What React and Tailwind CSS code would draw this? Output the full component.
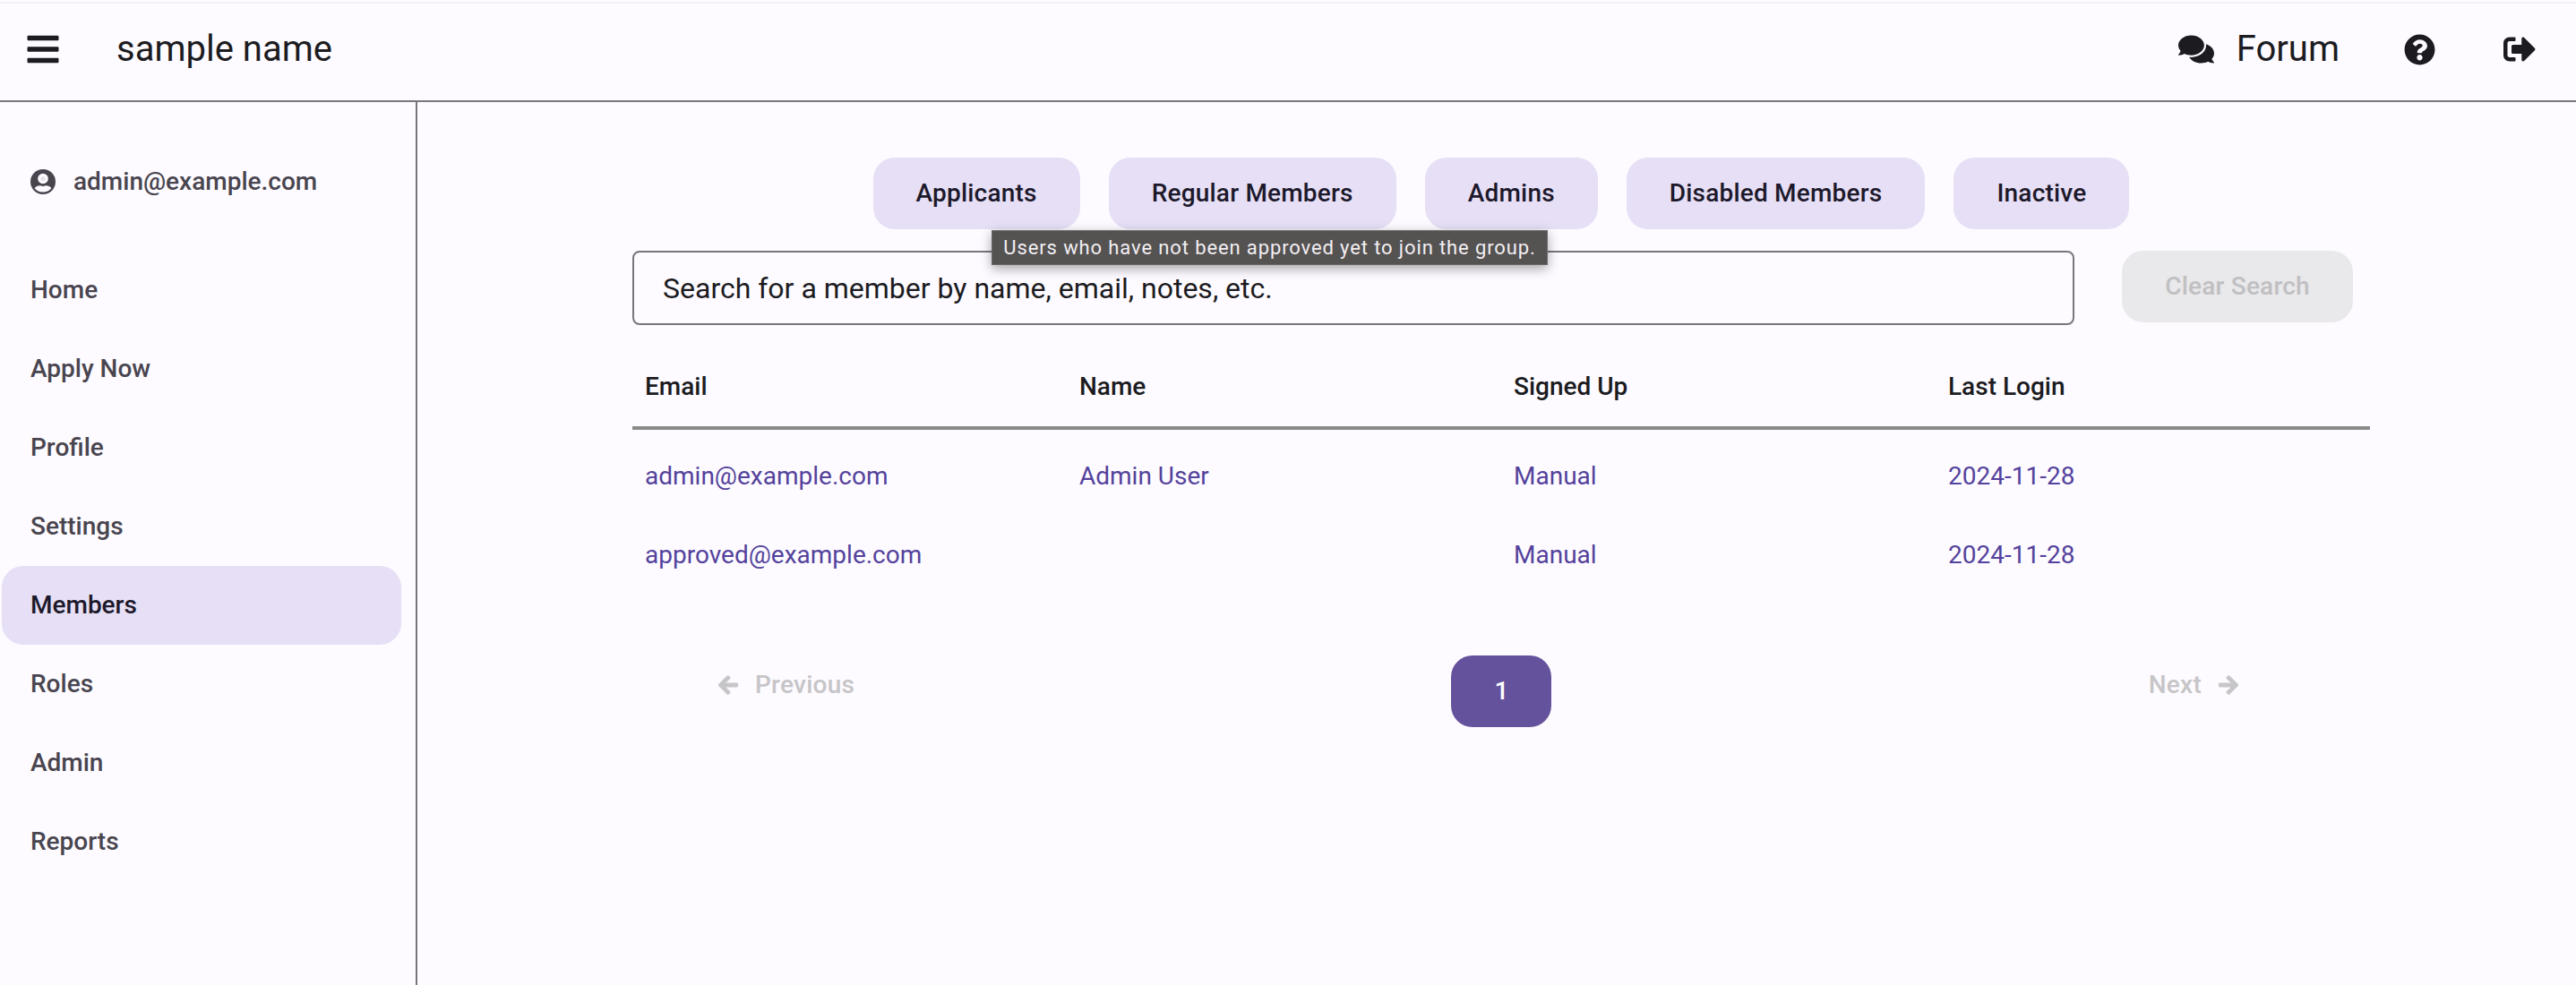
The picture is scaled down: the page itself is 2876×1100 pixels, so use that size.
import React from "react";
import { FaBars, FaComments, FaQuestionCircle, FaSignOutAlt, FaArrowLeft, FaArrowRight } from "react-icons/fa";

const nav = ["Home", "Apply Now", "Profile", "Settings", "Members", "Roles", "Admin", "Reports"];
const tabs = ["Applicants", "Regular Members", "Admins", "Disabled Members", "Inactive"];
const rows = [
  ["admin@example.com", "Admin User", "Manual", "2024-11-28"],
  ["approved@example.com", "", "Manual", "2024-11-28"],
];
const heads = ["Email", "Name", "Signed Up", "Last Login"];

function UserIcon() {
  return (
    <svg viewBox="0 0 28 28" className="h-[28px] w-[28px] shrink-0">
      <circle cx="14" cy="14" r="14" fill="#49454f" />
      <circle cx="14" cy="10.5" r="5.8" fill="#fdfbff" />
      <circle cx="14" cy="10.5" r="2.6" fill="#e4e2e7" />
      <path d="M4.6 21.2C6.4 18.6 9 18 11 18.2c1 .5 2 .8 3 .8s2-.3 3-.8c2-.2 4.6.4 6.4 3C21.2 24 17.8 25.6 14 25.6S6.800 24 4.600 21.200z" fill="#fdfbff" />
    </svg>
  );
}

export default function App() {
  return (
    <div className="h-[1100px] overflow-hidden bg-[#fdfbff] text-[#1c1b1f] font-['Roboto',sans-serif]">
      <div className="h-[2px]" />
      <div className="h-[2px] bg-[#f3f1f4]" />
      <header className="flex h-[108px] items-center pb-[6px] pl-[28px] pr-[45px]">
        <FaBars className="text-[40px]" />
        <span className="ml-[62px] text-[40px] leading-none">sample name</span>
        <div className="ml-auto flex items-center">
          <FaComments className="text-[40px]" />
          <span className="ml-[25px] text-[40px] leading-none">Forum</span>
          <FaQuestionCircle className="ml-[72px] text-[35px]" />
          <FaSignOutAlt className="ml-[76px] text-[36px]" />
        </div>
      </header>
      <div className="flex h-[988px] border-t-2 border-[#79747e]">
        <aside className="h-full w-[466px] shrink-0 border-r-2 border-[#79747e] pl-[2px]">
          <div className="flex h-[166px] items-center pt-[12px] pl-[32px] text-[28px] font-medium text-[#49454f]">
            <UserIcon />
            <span className="ml-[20px]">admin@example.com</span>
          </div>
          <nav>
            {nav.map((n) => (
              <div
                key={n}
                className={
                  n === "Members"
                    ? "flex h-[88px] w-[446px] items-center rounded-[24px] bg-[#e6dff6] pl-[32px] text-[28px] font-medium text-[#1d192b]"
                    : "flex h-[88px] w-[446px] items-center pl-[32px] text-[28px] font-medium text-[#49454f]"
                }
              >
                {n}
              </div>
            ))}
          </nav>
        </aside>
        <main className="ml-[240px] w-[1940px] shrink-0 pt-[62px]">
          <div className="relative flex justify-center gap-[32px]">
            {tabs.map((t) => (
              <div key={t} className="flex h-[80px] items-center rounded-[24px] bg-[#e6dff6] px-[48px] text-[28px] font-medium tracking-[0.2px] text-[#1d192b]">
                {t}
              </div>
            ))}
            <div className="absolute left-[401px] top-[81px] z-10 flex h-[39px] w-[621px] items-center justify-center whitespace-nowrap border border-[#6d6a6a] bg-[#555252] text-[22px] tracking-[0.88px] text-[#f2eff2] shadow-[0_4px_12px_rgba(0,0,0,0.35)]">
              Users who have not been approved yet to join the group.
            </div>
          </div>
          <div className="mt-[24px] flex items-start">
            <div className="flex h-[83px] w-[1610px] items-center rounded-[8px] border-2 border-[#79747e] pl-[32px] text-[32px]">
              Search for a member by name, email, notes, etc.
            </div>
            <div className="ml-[53px] flex h-[80px] w-[258px] items-center justify-center rounded-[24px] bg-[#e9e8ea] text-[28px] font-medium tracking-[0.2px] text-[#c0bfc2]">
              Clear Search
            </div>
          </div>
          <div className="mt-[25px] grid h-[92px] grid-cols-4 items-center border-b-4 border-[#8a8a8a] pb-[1px] text-[28px] font-medium">
            {heads.map((h) => (
              <div key={h} className="pl-[14px]">{h}</div>
            ))}
          </div>
          <div className="mt-[8px]">
            {rows.map((r) => (
              <div key={r[0]} className="grid h-[88px] grid-cols-4 items-center text-[28px] text-[#54429c]">
                {r.map((c, i) => (
                  <div key={i} className="pl-[14px]">{c}</div>
                ))}
              </div>
            ))}
          </div>
          <div className="mt-[68px] flex items-start justify-between pl-[95px] pr-[146px]">
            <div className="flex h-[66px] items-center text-[28px] font-medium tracking-[0.25px] text-[#c6c5c8]">
              <FaArrowLeft className="text-[24px]" stroke="currentColor" strokeWidth={24} />
              <span className="ml-[18px]">Previous</span>
            </div>
            <div className="flex h-[80px] w-[112px] items-center justify-center rounded-[24px] bg-[#65529d] text-[28px] font-medium text-white">
              1
            </div>
            <div className="flex h-[66px] items-center text-[28px] font-medium tracking-[0.25px] text-[#c6c5c8]">
              <span className="mr-[18px]">Next</span>
              <FaArrowRight className="text-[24px]" stroke="currentColor" strokeWidth={24} />
            </div>
          </div>
        </main>
      </div>
    </div>
  );
}
